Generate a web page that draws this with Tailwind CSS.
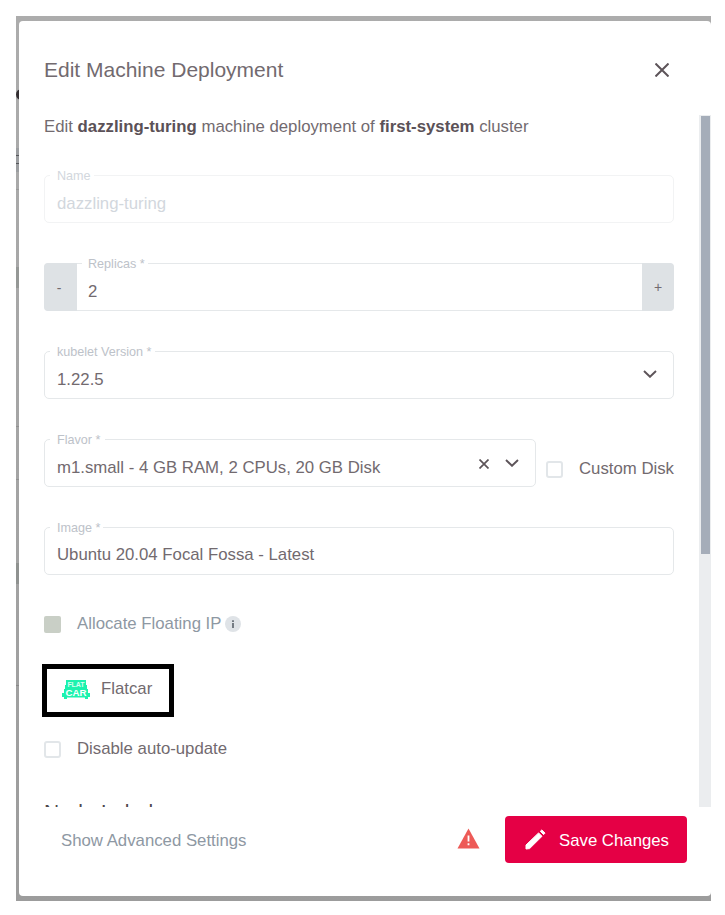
<!DOCTYPE html>
<html lang="en">
<head>
<meta charset="utf-8">
<title>Edit Machine Deployment</title>
<script src="https://cdn.jsdelivr.net/npm/@tailwindcss/browser@4"></script>
</head>
<body class="bg-white overflow-hidden font-['Liberation_Sans',Arial,sans-serif] text-[16.78px] leading-5 text-[#726a6f]">
<div class="relative ml-4 mt-4 w-[695px] h-[885px] overflow-hidden bg-linear-to-b from-[#acacac] to-[#9c9c9c] pl-[3px] pt-[5px]">
  <!-- page behind the dialog -->
  <div class="absolute left-0 top-[73px] h-[11px] w-[14px] rounded-full border-[3px] border-[#332e31]"></div>
  <div class="absolute left-0 top-[132px] h-6 w-3 bg-[#9b9da0]"></div>
  <div class="absolute left-0 top-[139px] h-[9px] w-3 border-y border-[#55565a]"></div>
  <div class="absolute left-0 top-[173px] h-px w-3 bg-[#989898]"></div>
  <div class="absolute left-0 top-[251px] h-[21px] w-3 bg-[#959896]"></div>
  <div class="absolute left-0 top-[410px] h-px w-3 bg-[#909090]"></div>
  <div class="absolute left-0 top-[463px] h-px w-3 bg-[#909090]"></div>
  <div class="absolute left-0 top-[547px] h-[21px] w-3 bg-[#8f9290]"></div>
  <div class="absolute left-0 top-[669px] h-px w-3 bg-[#888888]"></div>

  <div class="relative flex h-[875px] w-[692px] flex-col rounded-[4px] bg-white">
    <header class="flex h-[94px] shrink-0 items-start justify-between pl-[25px] pr-[42px] pt-[37px]">
      <h1 class="text-[21px] leading-6">Edit Machine Deployment</h1>
      <svg class="mt-[5px] h-[14px] w-[14px]" viewBox="0 0 14 14" fill="none" stroke="#5d5459" stroke-width="2"><path d="M0.5 0.5L13.5 13.5M13.5 0.5L0.5 13.5"/></svg>
    </header>

    <main class="flex h-[692px] shrink-0 justify-between overflow-hidden pl-[25px]">
      <div class="w-[630px] shrink-0">
        <p class="pt-[2px]">Edit <b class="text-[#5b5157]">dazzling-turing</b> machine deployment of <b class="text-[#5b5157]">first-system</b> cluster</p>

        <div class="relative mt-[38px] h-12 rounded-[5px] border border-[#f2f3f4] px-3 pt-[18px] text-[#d2d7dd]">
          <span class="absolute left-[5px] top-[-8px] bg-white pl-[7px] pr-[3px] text-[12.6px] leading-4">Name</span>dazzling-turing</div>

        <div class="relative mt-10 flex h-12 rounded-[5px] border border-[#e5e8ea]">
          <div class="-my-px -ml-px w-[33px] rounded-l-[4px] bg-[#dee2e5] pt-[15px] text-center text-[14px]"><span class="-ml-[3px]">-</span></div>
          <div class="grow pl-[11px] pt-[18px]">2</div>
          <div class="-my-px -mr-px w-[32px] rounded-r-[4px] bg-[#dee2e5] pt-[14px] text-center text-[14px]">+</div>
          <span class="absolute left-[37px] top-[-8px] bg-white pl-[6px] pr-[3px] text-[12.6px] leading-4 text-[#bdc2c9]">Replicas *</span>
        </div>

        <div class="relative mt-10 flex h-12 justify-between rounded-[5px] border border-[#e5e8ea] pl-3 pr-4 pt-[18px]">
          <span class="absolute left-[5px] top-[-8px] bg-white pl-[7px] pr-[3px] text-[12.6px] leading-4 text-[#bdc2c9]">kubelet Version *</span>1.22.5
          <svg class="h-[8px] w-[14px]" viewBox="0 0 14 8" fill="none" stroke="#5d5459" stroke-width="1.9"><path d="M1 1L7 6.8L13 1"/></svg>
        </div>

        <div class="mt-10 flex h-12">
          <div class="relative flex h-12 w-[492px] rounded-[5px] border border-[#e5e8ea] pl-3 pr-4 pt-[18px]">
            <span class="absolute left-[5px] top-[-8px] bg-white pl-[7px] pr-[5px] text-[12.6px] leading-4 text-[#bdc2c9]">Flavor *</span>
            <span class="grow">m1.small - 4 GB RAM, 2 CPUs, 20 GB Disk</span>
            <svg class="mr-[16px] mt-[1px] h-[10px] w-[10px]" viewBox="0 0 10 10" fill="none" stroke="#5d5459" stroke-width="1.7"><path d="M0.5 0.5L9.5 9.5M9.5 0.5L0.5 9.5"/></svg>
            <svg class="mt-[1px] h-[8px] w-[14px]" viewBox="0 0 14 8" fill="none" stroke="#5d5459" stroke-width="1.9"><path d="M1 1L7 6.8L13 1"/></svg>
          </div>
          <div class="ml-[10px] mt-[22px] h-[17px] w-[17px] shrink-0 rounded-[3px] border-2 border-[#e2e6e9]"></div>
          <span class="ml-4 mt-[20px] whitespace-nowrap">Custom Disk</span>
        </div>

        <div class="relative mt-10 h-12 rounded-[5px] border border-[#e5e8ea] px-3 pt-[17px]">
          <span class="absolute left-[5px] top-[-8px] bg-white pl-[7px] pr-[3px] text-[12.6px] leading-4 text-[#bdc2c9]">Image *</span>Ubuntu 20.04 Focal Fossa - Latest</div>

        <div class="mt-[39px] flex h-5 items-center text-[#8e98a3]">
          <div class="h-[17px] w-[17px] rounded-[2px] bg-[#c9cfc6]"></div>
          <span class="ml-4">Allocate Floating IP</span>
          <svg class="ml-[4px] h-4 w-4" viewBox="0 0 16 16"><circle cx="8" cy="8" r="8" fill="#dfe3e7"/><path d="M7 4.2h2v1.8H7zM7 7h2v5H7z" fill="#747b83"/></svg>
        </div>

        <div class="-ml-[2px] mt-[30px] flex h-[53px] w-[132px] border-[5px] border-black">
          <svg class="ml-[15px] mt-[11px] h-[19px] w-[28px]" viewBox="0 0 28 19">
            <path d="M4 0H24V5H25V9H26V13H28V17H26V19H23V17.5H5V19H2V17H0V13H2V9H3V5H4Z" fill="#1df2ae"/>
            <text x="5.4" y="6.8" textLength="17.2" lengthAdjust="spacing" font-family="Liberation Sans" font-size="7" font-weight="700" fill="#d5fff0">FLAT</text>
            <text x="3.4" y="15.8" textLength="21" lengthAdjust="spacingAndGlyphs" font-family="Liberation Sans" font-size="8.8" font-weight="700" fill="#fff">CAR</text>
          </svg>
          <span class="ml-[11px] mt-[10px]">Flatcar</span>
        </div>

        <div class="mt-[22px] flex h-5 items-center">
          <div class="h-[17px] w-[17px] rounded-[3px] border-2 border-[#e2e6e9]"></div>
          <span class="ml-4">Disable auto-update</span>
        </div>

        <h2 class="mt-[41px] text-[21px] leading-6 tracking-[0.2px] text-[#4f484c]">Node Labels</h2>
      </div>

      <div class="h-[692px] w-3 bg-[#ebedef] px-[2px] pt-[1px] pr-[1px]">
        <div class="h-[438px] bg-[#a5adb9]"></div>
      </div>
    </main>

    <footer class="flex items-start pl-[42px] pt-[9px] text-[#8e98a3]">
      <span class="mt-[15px] grow">Show Advanced Settings</span>
      <svg class="mr-[25px] mt-[12px] h-[21px] w-[23px]" viewBox="0 0 23 21"><path d="M11.5 .5L22.5 20.5H.5Z" fill="#ed5a57"/><path d="M10.6 7.5h1.8v6h-1.8zM10.6 15.2h1.8v2h-1.8z" fill="#fff"/></svg>
      <button class="mr-6 flex h-[47px] w-[182px] items-center rounded-[4px] bg-[#e50045] pl-5 text-white">
        <svg class="mr-[13px] h-[21px] w-[21px]" viewBox="0 0 21 21" fill="#fff" stroke="#fff" stroke-width="1" stroke-linejoin="round"><path d="M1 16L13.6 3.9L17 7.3L4.6 19.6L1 20Z"/><path d="M15.3 2.3L16.8 .9L20 4.1L18.6 5.6Z"/></svg>
        <span class="mt-[2px]">Save Changes</span>
      </button>
    </footer>
  </div>
</div>
</body>
</html>
